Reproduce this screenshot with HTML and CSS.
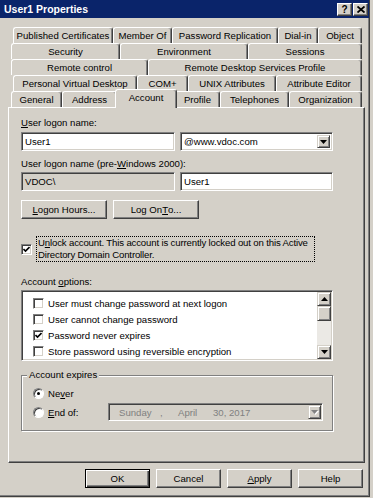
FILE: index.html
```html
<!DOCTYPE html>
<html>
<head>
    <title>User1 Properties</title>
    <link rel="stylesheet" href="styles.css">
</head>
<body>
<div class="window">

    <div class="titlebar">
        <span class="title">User1 Properties</span>
        <div class="caption-buttons">
            <span class="cap-btn">?</span>
            <span class="cap-btn">
                <svg width="8" height="7" viewBox="0 0 8 7"><path d="M0.5 0.5 L7.5 6.5 M7.5 0.5 L0.5 6.5" stroke="#000" stroke-width="1.8"/></svg>
            </span>
        </div>
    </div>

    <div class="tabs">
        <div class="tab-row row1">
            <div class="tab">Published Certificates</div>
            <div class="tab">Member Of</div>
            <div class="tab">Password Replication</div>
            <div class="tab">Dial-in</div>
            <div class="tab">Object</div>
        </div>
        <div class="tab-row row2">
            <div class="tab">Security</div>
            <div class="tab">Environment</div>
            <div class="tab">Sessions</div>
        </div>
        <div class="tab-row row3">
            <div class="tab">Remote control</div>
            <div class="tab">Remote Desktop Services Profile</div>
        </div>
        <div class="tab-row row4">
            <div class="tab">Personal Virtual Desktop</div>
            <div class="tab">COM+</div>
            <div class="tab">UNIX Attributes</div>
            <div class="tab">Attribute Editor</div>
        </div>
        <div class="tab-row row5">
            <div class="tab">General</div>
            <div class="tab">Address</div>
            <div class="tab active">Account</div>
            <div class="tab">Profile</div>
            <div class="tab">Telephones</div>
            <div class="tab">Organization</div>
        </div>
    </div>

    <div class="panel">
        <div class="label"><u>U</u>ser logon name:</div>
        <div class="field-row">
            <div class="textbox">User1</div>
            <div class="textbox combo">
                <span class="combo-text">@www.vdoc.com</span>
                <span class="drop-btn">
                    <svg width="7" height="4" viewBox="0 0 7 4"><path d="M0 0 H7 L3.5 4 Z" fill="#000"/></svg>
                </span>
            </div>
        </div>

        <div class="label label-gap">User logon name (pre-<u>W</u>indows 2000):</div>
        <div class="field-row tight">
            <div class="textbox readonly">VDOC\</div>
            <div class="textbox">User1</div>
        </div>

        <div class="button-row">
            <span class="btn wide"><u>L</u>ogon Hours...</span>
            <span class="btn wide">Log On <u>T</u>o...</span>
        </div>

        <div class="unlock">
            <span class="check checked">
                <svg width="7" height="7" viewBox="0 0 7 7"><path d="M0.5 3 L2.5 5 L6.5 1" stroke="#000" stroke-width="1.6" fill="none"/></svg>
            </span>
            <span class="focus-text"><span class="line">U<u>n</u>lock account. This account is currently locked out on this Active</span><span class="line">Directory Domain Controller.</span></span>
        </div>

        <div class="label options-label">Account <u>o</u>ptions:</div>
        <div class="listbox">
            <div class="list-items">
                <div class="list-item"><span class="check"></span>User must change password at next logon</div>
                <div class="list-item"><span class="check"></span>User cannot change password</div>
                <div class="list-item"><span class="check checked"><svg width="7" height="7" viewBox="0 0 7 7"><path d="M0.5 3 L2.5 5 L6.5 1" stroke="#000" stroke-width="1.6" fill="none"/></svg></span>Password never expires</div>
                <div class="list-item"><span class="check"></span>Store password using reversible encryption</div>
            </div>
            <div class="scrollbar">
                <span class="scroll-btn"><svg width="7" height="4" viewBox="0 0 7 4"><path d="M0 4 H7 L3.5 0 Z" fill="#000"/></svg></span>
                <span class="scroll-thumb"></span>
                <span class="scroll-track"></span>
                <span class="scroll-btn"><svg width="7" height="4" viewBox="0 0 7 4"><path d="M0 0 H7 L3.5 4 Z" fill="#000"/></svg></span>
            </div>
        </div>

        <fieldset class="groupbox">
            <legend>Account expires</legend>
            <div class="radio-row">
                <span class="radio checked"></span>
                <span>Ne<u>v</u>er</span>
            </div>
            <div class="radio-row">
                <span class="radio-label"><span class="radio"></span><span><u>E</u>nd of:</span></span>
                <div class="datepicker">
                    <span class="date-part day">Sunday</span>
                    <span class="date-part comma">,</span>
                    <span class="date-part month">April</span>
                    <span class="date-part">30, 2017</span>
                    <span class="drop-btn disabled">
                        <svg width="8" height="5" viewBox="0 0 8 5"><path d="M1 1 H8 L4.5 5 Z" fill="#fff"/><path d="M0 0 H7 L3.5 4 Z" fill="#808080"/></svg>
                    </span>
                </div>
            </div>
        </fieldset>
    </div>

    <div class="dialog-buttons">
        <span class="btn default">OK</span>
        <span class="btn">Cancel</span>
        <span class="btn"><u>A</u>pply</span>
        <span class="btn">Help</span>
    </div>
</div>
</body>
</html>
```

FILE: styles.css
```css
/* Classic dialog look */
body {
    margin: 0;
    background: #d4d0c8;
    font-family: "Liberation Sans", Arial, sans-serif;
    font-size: 9.6px;
    color: #000;
}

.window {
    width: 370px;
    height: 497px;
    box-sizing: border-box;
    background: #d4d0c8;
    border-right: 1px solid #404040;
    border-bottom: 1px solid #404040;
    box-shadow: inset -1px -1px 0 #808080;
}

/* Title bar */
.titlebar {
    height: 18px;
    background: #0a246a;
    display: flex;
    align-items: center;
    justify-content: space-between;
    padding: 0 1px 0 4px;
}

.title {
    color: #fff;
    font-weight: bold;
    font-size: 10.5px;
}

.caption-buttons {
    display: flex;
}

.cap-btn {
    width: 15px;
    height: 13px;
    box-sizing: border-box;
    display: flex;
    align-items: center;
    justify-content: center;
    background: #d4d0c8;
    border: 1px solid;
    border-color: #fff #404040 #404040 #fff;
    box-shadow: inset -1px -1px 0 #808080;
    font-weight: bold;
    font-size: 10px;
    line-height: 11px;
}

.cap-btn + .cap-btn {
    margin-left: 1px;
}

/* Tabs */
.tabs {
    margin: 9px 0 0 11px;
    width: 351px;
}

.tab-row {
    display: grid;
    height: 16px;
}

.row1 { margin-left: 2px; grid-template-columns: 100px 59px 106px 40px 1fr; }
.row2 { grid-template-columns: 109px 128px 1fr; }
.row3 { grid-template-columns: 137px 1fr; }
.row4 { margin-left: 2px; grid-template-columns: 124px 51px 88px 1fr; }
.row5 { grid-template-columns: 51px 55px 58px 45px 69px 1fr; }

.tab {
    box-sizing: border-box;
    height: 16px;
    line-height: 15px;
    text-align: center;
    white-space: nowrap;
    background: #d4d0c8;
    border-top: 1px solid #fff;
    border-left: 1px solid #fff;
    border-right: 1px solid #404040;
    box-shadow: inset -1px 0 0 #808080;
    border-radius: 3px 3px 0 0;
}

.tab.active {
    height: 19px;
    margin: -2px -2px 0;
    line-height: 16px;
    z-index: 2;
}

/* Page panel */
.panel {
    margin-left: 8px;
    width: 357px;
    height: 356px;
    box-sizing: border-box;
    border: 1px solid;
    border-color: #fff #404040 #404040 #fff;
    box-shadow: inset -1px -1px 0 #808080;
    padding: 9px 0 0 12px;
}

.label {
    line-height: 12px;
}

.label-gap {
    margin-top: 7px;
}

.field-row {
    display: flex;
    gap: 5px;
    margin-top: 3px;
}

.field-row.tight {
    margin-top: 2px;
}

.textbox {
    box-sizing: border-box;
    width: 154px;
    height: 19px;
    background: #fff;
    border: 1px solid;
    border-color: #808080 #fff #fff #808080;
    box-shadow: inset 1px 1px 0 #404040, inset -1px -1px 0 #d4d0c8;
    padding: 0 3px;
    line-height: 17px;
}

.textbox + .textbox {
    width: 153px;
}

.textbox.readonly {
    background: #d4d0c8;
}

.combo {
    display: flex;
    align-items: center;
    padding: 0 2px 0 3px;
}

.combo-text {
    flex: 1;
}

.drop-btn {
    width: 13px;
    height: 13px;
    box-sizing: border-box;
    display: flex;
    align-items: center;
    justify-content: center;
    background: #d4d0c8;
    border: 1px solid;
    border-color: #d4d0c8 #404040 #404040 #d4d0c8;
    box-shadow: inset 1px 1px 0 #fff, inset -1px -1px 0 #808080;
}

/* Buttons */
.button-row {
    display: flex;
    gap: 6px;
    margin-top: 9px;
}

.btn {
    box-sizing: border-box;
    width: 65px;
    height: 19px;
    display: flex;
    align-items: center;
    justify-content: center;
    background: #d4d0c8;
    border: 1px solid;
    border-color: #fff #404040 #404040 #fff;
    box-shadow: inset -1px -1px 0 #808080;
}

.btn.wide {
    width: 86px;
}

.btn.default {
    border: 1px solid #000;
    box-shadow: inset 1px 1px 0 #fff, inset -1px -1px 0 #404040, inset -2px -2px 0 #808080;
}

/* Checkboxes */
.unlock {
    display: flex;
    align-items: center;
    gap: 4px;
    margin-top: 17px;
}

.check {
    box-sizing: border-box;
    width: 11px;
    height: 11px;
    flex: none;
    display: flex;
    align-items: center;
    justify-content: center;
    background: #fff;
    border: 1px solid;
    border-color: #808080 #fff #fff #808080;
    box-shadow: inset 1px 1px 0 #404040, inset -1px -1px 0 #d4d0c8;
}

.focus-text {
    width: 279px;
    box-sizing: border-box;
    border: 1px dotted #000;
    padding: 0 1px;
    line-height: 12px;
    letter-spacing: -0.15px;
    white-space: nowrap;
}

.focus-text .line {
    display: block;
}

.options-label {
    margin-top: 14px;
}

/* List box */
.listbox {
    box-sizing: border-box;
    width: 312px;
    height: 71px;
    margin-top: 2px;
    display: flex;
    background: #fff;
    border: 1px solid;
    border-color: #808080 #fff #fff #808080;
    box-shadow: inset 1px 1px 0 #404040, inset -1px -1px 0 #d4d0c8;
    padding: 1px;
}

.list-items {
    flex: 1;
    padding: 3px 0 0 10px;
}

.list-item {
    height: 16px;
    display: flex;
    align-items: center;
    gap: 4px;
}

.scrollbar {
    width: 14px;
    display: flex;
    flex-direction: column;
}

.scroll-btn, .scroll-thumb {
    box-sizing: border-box;
    height: 14px;
    display: flex;
    align-items: center;
    justify-content: center;
    background: #d4d0c8;
    border: 1px solid;
    border-color: #d4d0c8 #404040 #404040 #d4d0c8;
    box-shadow: inset 1px 1px 0 #fff, inset -1px -1px 0 #808080;
}

.scroll-thumb {
    height: 15px;
}

.scroll-track {
    flex: 1;
    background: #ebe9e5;
}

/* Group box */
.groupbox {
    box-sizing: border-box;
    width: 312px;
    height: 62px;
    margin: 8px 0 0;
    min-width: 0;
    padding: 4px 0 0 11px;
    border: 1px solid #808080;
    box-shadow: 1px 1px 0 #fff, inset 1px 1px 0 #fff;
}

.groupbox legend {
    padding: 0 2px;
    margin-left: -6px;
    line-height: 12px;
    background: #d4d0c8;
}

.radio-row {
    display: flex;
    align-items: center;
    gap: 4px;
    height: 16px;
}

.radio-row + .radio-row {
    margin-top: 2px;
    height: 18px;
    gap: 0;
}

.radio-label {
    width: 75px;
    display: flex;
    align-items: center;
    gap: 4px;
}

.radio {
    box-sizing: border-box;
    width: 11px;
    height: 11px;
    flex: none;
    border-radius: 50%;
    background: #fff;
    border: 1px solid;
    border-color: #808080 #fff #fff #808080;
    box-shadow: inset 1px 1px 0 #404040;
    display: flex;
    align-items: center;
    justify-content: center;
}

.radio.checked::after {
    content: "";
    width: 3px;
    height: 3px;
    border-radius: 50%;
    background: #000;
}

.datepicker {
    box-sizing: border-box;
    width: 215px;
    height: 18px;
    display: flex;
    align-items: center;
    padding: 0 1px 0 10px;
    color: #808080;
    background: #d4d0c8;
    border: 1px solid;
    border-color: #808080 #fff #fff #808080;
    box-shadow: inset 1px 1px 0 #404040, inset -1px -1px 0 #d4d0c8;
}

.date-part.day { width: 41px; }
.date-part.comma { width: 18px; }
.date-part.month { width: 35px; }

.datepicker .drop-btn {
    margin-left: auto;
    height: 14px;
}

/* Bottom buttons */
.dialog-buttons {
    display: flex;
    justify-content: flex-end;
    gap: 6px;
    margin-top: 6px;
    padding-right: 6px;
}
```
